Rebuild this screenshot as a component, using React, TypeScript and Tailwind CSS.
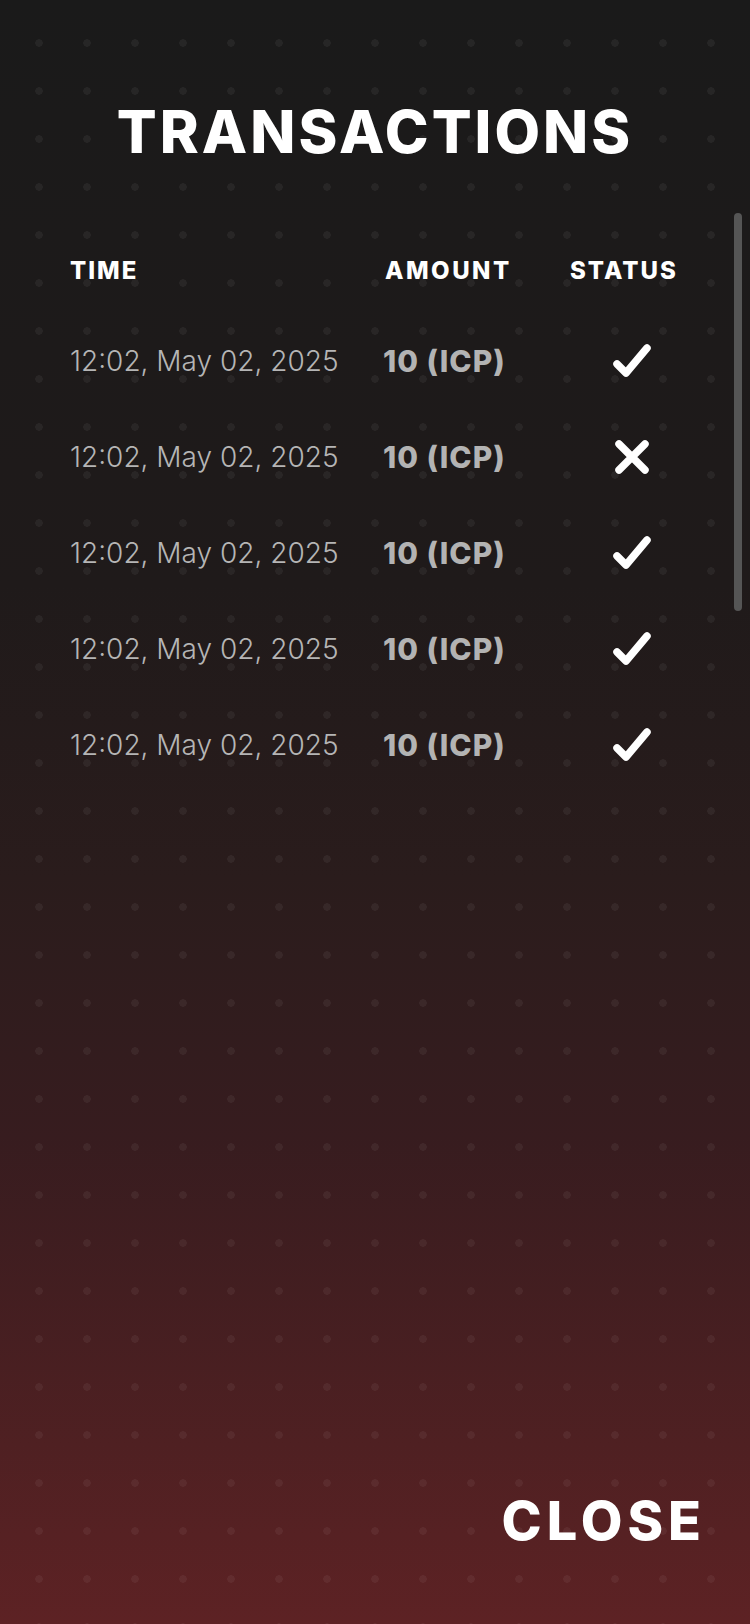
const rows = [
  { time: "12:02, May 02, 2025", amount: "10 (ICP)", ok: true },
  { time: "12:02, May 02, 2025", amount: "10 (ICP)", ok: false },
  { time: "12:02, May 02, 2025", amount: "10 (ICP)", ok: true },
  { time: "12:02, May 02, 2025", amount: "10 (ICP)", ok: true },
  { time: "12:02, May 02, 2025", amount: "10 (ICP)", ok: true },
];

const CheckIcon = () => (
  <svg width="40" height="40" viewBox="0 0 40 40" fill="none">
    <polyline points="5,23 14,32 35,7" stroke="#fff" strokeWidth="7.5" strokeLinecap="round" strokeLinejoin="round" />
  </svg>
);

const CrossIcon = () => (
  <svg width="40" height="40" viewBox="0 0 40 40" fill="none">
    <path d="M7 7 L33 33 M33 7 L7 33" stroke="#fff" strokeWidth="7.5" strokeLinecap="round" />
  </svg>
);

export default function App() {
  return (
    <div
      className="relative w-full h-[1624px] overflow-hidden flex flex-col text-white font-['Inter','Liberation_Sans',sans-serif] [background-image:radial-gradient(circle,rgba(255,255,255,0.05)_3.5px,transparent_4px),linear-gradient(to_bottom,#1a1a1a_0%,#1f1a1a_36%,#2a1c1c_54%,#371c1f_70%,#4f2022_89%,#5d2224_100%)] [background-size:48px_48px,100%_100%] [background-position:15px_19px,0_0]"
    >
      <h1 className="pt-[102px] text-center text-[59px] leading-none font-extrabold tracking-[3px]">TRANSACTIONS</h1>

      {/* table */}
      <div className="mt-[68px] flex flex-col pl-[70px] pr-[72px]">
        <div className="grid grid-cols-[315px_185px_1fr] h-[84px] items-center text-[24px] leading-none font-extrabold tracking-[2px]">
          <span>TIME</span>
          <span className="tracking-[2.5px]">AMOUNT</span>
          <span>STATUS</span>
        </div>
        {rows.map((r, i) => (
          <div key={i} className="grid grid-cols-[313px_187px_1fr] h-[96px] items-center">
            <span className="text-[28px] leading-none font-light text-[#b5b5b5]">{r.time}</span>
            <span className="text-[30px] leading-none font-extrabold text-[#b3b3b3] tracking-[1px]">{r.amount}</span>
            <span className="flex justify-center pl-4">{r.ok ? <CheckIcon /> : <CrossIcon />}</span>
          </div>
        ))}
      </div>

      {/* scrollbar thumb */}
      <div className="absolute right-[8px] top-[213px] w-[8px] h-[398px] rounded-full bg-[#555555]" />

      <div className="mt-auto pb-[76px] pr-[44px] flex justify-end">
        <button className="text-[54px] leading-none font-extrabold tracking-[5px] text-white">CLOSE</button>
      </div>
    </div>
  );
}
